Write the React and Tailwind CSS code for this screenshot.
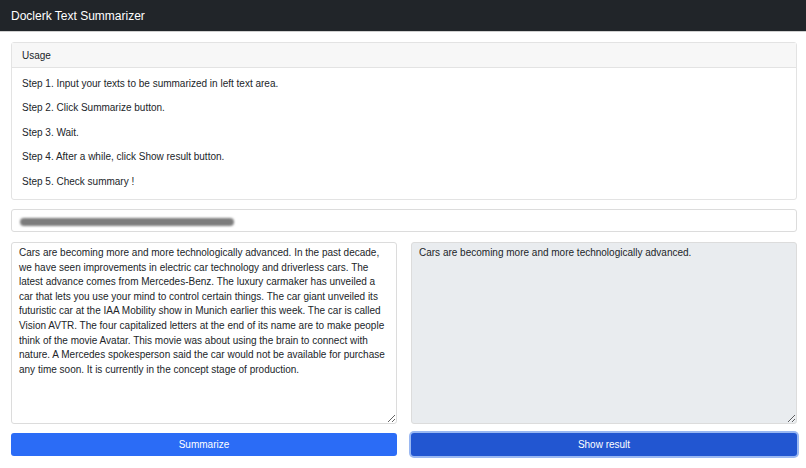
import { useState } from 'react'

const SAMPLE = 'Cars are becoming more and more technologically advanced. In the past decade, we have seen improvements in electric car technology and driverless cars. The latest advance comes from Mercedes-Benz. The luxury carmaker has unveiled a car that lets you use your mind to control certain things. The car giant unveiled its futuristic car at the IAA Mobility show in Munich earlier this week. The car is called Vision AVTR. The four capitalized letters at the end of its name are to make people think of the movie Avatar. This movie was about using the brain to connect with nature. A Mercedes spokesperson said the car would not be available for purchase any time soon. It is currently in the concept stage of production.'

const STEPS = [
  'Step 1. Input your texts to be summarized in left text area.',
  'Step 2. Click Summarize button.',
  'Step 3. Wait.',
  'Step 4. After a while, click Show result button.',
  'Step 5. Check summary !',
]

export default function App() {
  const [text, setText] = useState(SAMPLE)
  const [summary, setSummary] = useState('Cars are becoming more and more technologically advanced.')

  return (
    <div className="min-h-[468px] bg-white text-[#212529] font-['Liberation_Sans',Arial,sans-serif]">
      <nav className="h-8 bg-[#212529] flex items-center px-[11px] border-b border-[#d0d0d0]">
        <span className="text-white text-[12px]">Doclerk Text Summarizer</span>
      </nav>

      <div className="pl-[11px] pr-[9px] pt-[10px]">
        <div className="border border-[#e3e3e3] rounded-[3px]">
          <div className="h-[25px] bg-[#f7f7f7] border-b border-[#e3e3e3] flex items-center px-[10px] text-[10px]">Usage</div>
          <div className="px-[10px] pt-[9px] text-[10px]">
            {STEPS.map(s => (
              <p key={s} className="h-[24.4px] leading-[14px]">{s}</p>
            ))}
          </div>
        </div>

        {/* blurred-out input content */}
        <div className="mt-[9px] h-[23px] border border-[#dcdcdc] rounded-[3px] flex items-center pl-[8px]">
          <div className="h-[8px] w-[214px] bg-[#7c7c7c] rounded-full blur-[1px] mt-[3px]"></div>
        </div>

        <div className="mt-[10px] grid grid-cols-2 gap-[14px]">
          <textarea value={text} onChange={e => setText(e.target.value)}
            className="h-[182px] border border-[#dcdcdc] rounded-[3px] px-[7px] py-[3px] text-[10px] leading-[14.6px] outline-none resize-y" />
          <textarea value={summary} onChange={e => setSummary(e.target.value)} readOnly
            className="h-[182px] border border-[#dcdcdc] rounded-[3px] bg-[#e9ecef] px-[7px] py-[3px] text-[10px] leading-[14.6px] outline-none resize-y" />
        </div>

        <div className="mt-[9px] grid grid-cols-2 gap-[14px]">
          <button className="h-[23px] rounded-[3px] bg-[#2b6cf6] text-white text-[10px]">Summarize</button>
          <button className="h-[23px] rounded-[3px] bg-[#2256d1] text-white text-[10px] ring-[2px] ring-[#9ab8f2]">Show result</button>
        </div>
      </div>
    </div>
  )
}
